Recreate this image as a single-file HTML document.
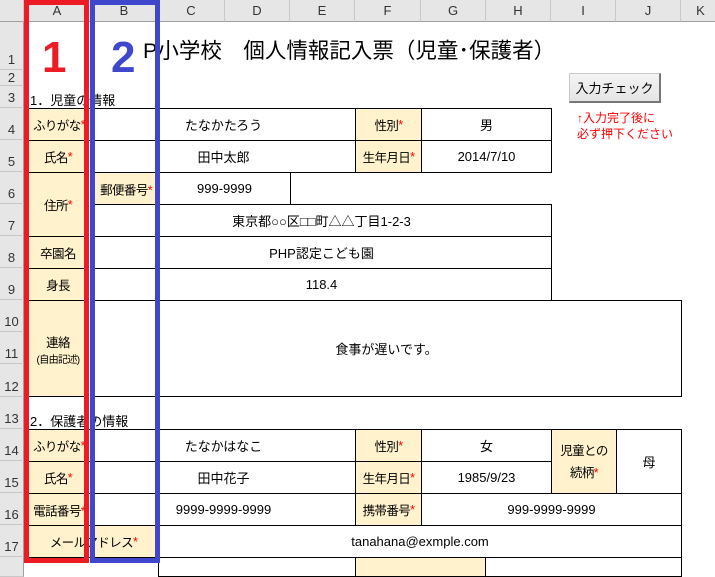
<!DOCTYPE html><html><head><meta charset="utf-8"><style>
*{margin:0;padding:0;box-sizing:border-box}
body{width:715px;height:565px;overflow:hidden;background:#fff;position:relative;font-family:"Liberation Sans","Noto Sans CJK JP",sans-serif;font-size:13px;color:#000}
.a{position:absolute}
.c{position:absolute;border:1px solid #000;display:flex;align-items:center;justify-content:center;white-space:nowrap;overflow:hidden;background:#fff}
.l{background:#fff2cc;letter-spacing:-0.6px;font-size:12.5px}
.la{justify-content:flex-start}
.r{color:#f00}
.rt{position:absolute;top:50%;transform:translateY(-50%);white-space:nowrap}
.ch{position:absolute;top:0;height:22px;background:#e6e6e6;border-right:1px solid #c8c8c8;border-bottom:1px solid #a0a0a0;text-align:center;line-height:22px;font-size:13px;color:#333}
.rh{position:absolute;left:0;width:24px;background:#e6e6e6;border-bottom:1px solid #c8c8c8;border-right:1px solid #a0a0a0;font-size:13px;color:#333;text-align:center;display:flex;align-items:flex-end;justify-content:center;padding-bottom:2px}
</style></head><body>
<div class="ch" style="left:0;width:24px"></div>
<div class="ch" style="left:24px;width:67px">A</div>
<div class="ch" style="left:91px;width:67px">B</div>
<div class="ch" style="left:158px;width:67px">C</div>
<div class="ch" style="left:225px;width:65px">D</div>
<div class="ch" style="left:290px;width:65px">E</div>
<div class="ch" style="left:355px;width:66px">F</div>
<div class="ch" style="left:421px;width:65px">G</div>
<div class="ch" style="left:486px;width:65px">H</div>
<div class="ch" style="left:551px;width:65px">I</div>
<div class="ch" style="left:616px;width:65px">J</div>
<div class="ch" style="left:681px;width:40px">K</div>

<div class="rh" style="top:22px;height:48px">1</div>
<div class="rh" style="top:70px;height:16px;padding-bottom:0">2</div>
<div class="rh" style="top:86px;height:22px">3</div>
<div class="rh" style="top:108px;height:32px">4</div>
<div class="rh" style="top:140px;height:32px">5</div>
<div class="rh" style="top:172px;height:32px">6</div>
<div class="rh" style="top:204px;height:32px">7</div>
<div class="rh" style="top:236px;height:32px">8</div>
<div class="rh" style="top:268px;height:32px">9</div>
<div class="rh" style="top:300px;height:32px">10</div>
<div class="rh" style="top:332px;height:32px">11</div>
<div class="rh" style="top:364px;height:33px">12</div>
<div class="rh" style="top:397px;height:32px">13</div>
<div class="rh" style="top:429px;height:32px">14</div>
<div class="rh" style="top:461px;height:32px">15</div>
<div class="rh" style="top:493px;height:32px">16</div>
<div class="rh" style="top:525px;height:32px">17</div>
<div class="rh" style="top:557px;height:20px"></div>

<div class="a" style="left:143px;top:34px;font-size:21.5px;white-space:nowrap">P小学校　個人情報記入票（児童･保護者）</div>
<div class="a" style="left:30px;top:90px;white-space:nowrap">1．児童の情報</div>
<div class="a" style="left:30px;top:411px;white-space:nowrap">2．保護者の情報</div>

<!-- table 1 -->
<div class="c l la" style="left:28px;top:108px;width:64px;height:33px;padding-left:4px">ふりがな<span class="r">*</span></div>
<div class="c" style="left:91px;top:108px;width:265px;height:33px">たなかたろう</div>
<div class="c l" style="left:355px;top:108px;width:67px;height:33px">性別<span class="r">*</span></div>
<div class="c" style="left:421px;top:108px;width:131px;height:33px">男</div>
<div class="c l" style="left:28px;top:140px;width:60px;height:33px">氏名<span class="r">*</span></div>
<div class="c" style="left:91px;top:140px;width:265px;height:33px">田中太郎</div>
<div class="c l" style="left:355px;top:140px;width:67px;height:33px">生年月日<span class="r">*</span></div>
<div class="c" style="left:421px;top:140px;width:131px;height:33px">2014/7/10</div>
<div class="c l" style="left:28px;top:172px;width:60px;height:65px">住所<span class="r">*</span></div>
<div class="c l" style="left:91px;top:172px;width:68px;height:33px"><span class="rt" style="right:6px">郵便番号<span class="r">*</span></span></div>
<div class="c" style="left:158px;top:172px;width:133px;height:33px">999-9999</div>
<div class="c" style="left:91px;top:204px;width:461px;height:33px">東京都○○区□□町△△丁目1-2-3</div>
<div class="c l" style="left:28px;top:236px;width:60px;height:33px">卒園名</div>
<div class="c" style="left:91px;top:236px;width:461px;height:33px">PHP認定こども園</div>
<div class="c l" style="left:28px;top:268px;width:60px;height:33px">身長</div>
<div class="c" style="left:91px;top:268px;width:461px;height:33px">118.4</div>
<div class="c l" style="left:28px;top:300px;width:60px;height:97px;flex-direction:column">連絡<span style="font-size:10px">(自由記述)</span></div>
<div class="c" style="left:91px;top:300px;width:591px;height:97px">食事が遅いです。</div>

<!-- table 2 -->
<div class="c l la" style="left:28px;top:429px;width:64px;height:33px;padding-left:4px">ふりがな<span class="r">*</span></div>
<div class="c" style="left:91px;top:429px;width:265px;height:33px">たなかはなこ</div>
<div class="c l" style="left:355px;top:429px;width:67px;height:33px">性別<span class="r">*</span></div>
<div class="c" style="left:421px;top:429px;width:131px;height:33px">女</div>
<div class="c l" style="left:551px;top:429px;width:66px;height:65px;flex-direction:column;line-height:22px">児童との<span>続柄<span class="r">*</span></span></div>
<div class="c" style="left:616px;top:429px;width:66px;height:65px">母</div>
<div class="c l" style="left:28px;top:461px;width:60px;height:33px">氏名<span class="r">*</span></div>
<div class="c" style="left:91px;top:461px;width:265px;height:33px">田中花子</div>
<div class="c l" style="left:355px;top:461px;width:67px;height:33px">生年月日<span class="r">*</span></div>
<div class="c" style="left:421px;top:461px;width:131px;height:33px">1985/9/23</div>
<div class="c l" style="left:28px;top:493px;width:64px;height:33px"><span class="rt" style="right:6px">電話番号<span class="r">*</span></span></div>
<div class="c" style="left:91px;top:493px;width:265px;height:33px">9999-9999-9999</div>
<div class="c l" style="left:355px;top:493px;width:67px;height:33px">携帯番号<span class="r">*</span></div>
<div class="c" style="left:421px;top:493px;width:261px;height:33px">999-9999-9999</div>
<div class="c l" style="left:28px;top:525px;width:131px;height:33px">メールアドレス<span class="r">*</span></div>
<div class="c" style="left:158px;top:525px;width:524px;height:33px">tanahana@exmple.com</div>
<div class="c l" style="left:355px;top:557px;width:131px;height:20px"></div>
<div class="c" style="left:485px;top:557px;width:197px;height:20px"></div>
<div class="c" style="left:158px;top:557px;width:198px;height:20px"></div>

<!-- button -->
<div class="a" style="left:569px;top:73px;width:92px;height:30px;background:linear-gradient(#f4f4f4,#e4e4e4);border:1px solid #c8c8c8;border-right:2px solid #777;border-bottom:2px solid #777;display:flex;align-items:center;justify-content:center;font-size:13px">入力チェック</div>
<div class="a" style="left:577px;top:110px;color:#f00;font-size:12px;line-height:16px;white-space:nowrap">↑入力完了後に<br>必ず押下ください</div>

<!-- overlays -->
<div class="a" style="left:24px;top:0;width:65px;height:563px;border:5px solid #ed1c24"></div>
<div class="a" style="left:90px;top:0;width:70px;height:563px;border:5px solid #3f48cc"></div>
<div class="a" style="left:42px;top:33px;font-size:44px;font-weight:bold;color:#ed1c24;line-height:50px">1</div>
<div class="a" style="left:111px;top:33px;font-size:44px;font-weight:bold;color:#3f48cc;line-height:50px">2</div>
</body></html>
